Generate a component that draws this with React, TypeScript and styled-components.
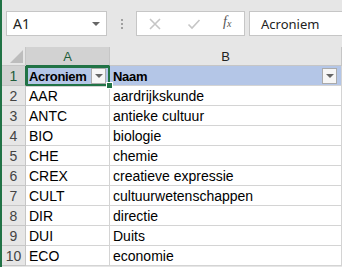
import React from 'react';
import styled, { createGlobalStyle } from 'styled-components';

const rows: [string, string][] = [
  ['AAR', 'aardrijkskunde'],
  ['ANTC', 'antieke cultuur'],
  ['BIO', 'biologie'],
  ['CHE', 'chemie'],
  ['CREX', 'creatieve expressie'],
  ['CULT', 'cultuurwetenschappen'],
  ['DIR', 'directie'],
  ['DUI', 'Duits'],
  ['ECO', 'economie'],
];

export default function App() {
  return (
    <>
      <GlobalStyle />
      <Styled.Window>
        <Styled.Toolbar>
          <Styled.NameBox>
            <span>A1</span>
            <Styled.Caret />
          </Styled.NameBox>
          <Styled.Grip>
            <i />
            <i />
            <i />
          </Styled.Grip>
          <Styled.FxButtons>
            <Styled.FxIcon $left={11}>
              <svg width="14" height="14" viewBox="0 0 14 14">
                <path d="M2 2 L12 12 M12 2 L2 12" stroke="#c6c6c6" strokeWidth="1.6" fill="none" />
              </svg>
            </Styled.FxIcon>
            <Styled.FxIcon $left={50}>
              <svg width="14" height="14" viewBox="0 0 14 14">
                <path d="M1.5 7.5 L5 11 L12.5 3" stroke="#c6c6c6" strokeWidth="1.6" fill="none" />
              </svg>
            </Styled.FxIcon>
            <Styled.Fx>
              f<sub>x</sub>
            </Styled.Fx>
          </Styled.FxButtons>
          <Styled.Formula>Acroniem</Styled.Formula>
        </Styled.Toolbar>

        <Styled.Sheet>
          <Styled.Corner>
            <svg width="13" height="13" viewBox="0 0 13 13">
              <path d="M13 0 L13 13 L0 13 Z" fill="#bdbdbd" />
            </svg>
          </Styled.Corner>
          <Styled.ColHead $active>A</Styled.ColHead>
          <Styled.ColHead>B</Styled.ColHead>

          <Styled.RowHead $active>1</Styled.RowHead>
          <Styled.HeadCell $selected>
            Acroniem
            <FilterButton />
            <Styled.Handle />
          </Styled.HeadCell>
          <Styled.HeadCell>
            Naam
            <FilterButton />
          </Styled.HeadCell>

          {rows.map(([code, name], i) => (
            <React.Fragment key={code}>
              <Styled.RowHead>{i + 2}</Styled.RowHead>
              <Styled.Cell>{code}</Styled.Cell>
              <Styled.Cell>{name}</Styled.Cell>
            </React.Fragment>
          ))}
        </Styled.Sheet>
      </Styled.Window>
    </>
  );
}

function FilterButton() {
  return (
    <Styled.Filter>
      <Styled.Caret />
    </Styled.Filter>
  );
}

const GlobalStyle = createGlobalStyle`
  body {
    margin: 0;
    background: #ffffff;
  }
`;

const Styled = {
  Window: styled.div`
    width: 342px;
    height: 267px;
    overflow: hidden;
    box-sizing: border-box;
    border-left: 2px solid #217346;
    background: #e6e6e6;
  `,
  Toolbar: styled.div`
    display: flex;
    align-items: flex-start;
    height: 47px;
    box-sizing: border-box;
    padding: 11px 0 0 4px;
  `,
  NameBox: styled.div`
    display: flex;
    align-items: center;
    justify-content: space-between;
    width: 101px;
    height: 25px;
    box-sizing: border-box;
    padding: 0 6px 0 6px;
    border: 1px solid #c6c6c6;
    background: #fff;
    font-family: 'Noto Sans', 'Open Sans', sans-serif;
    font-size: 14px;
    color: #222;
  `,
  Caret: styled.span`
    width: 0;
    height: 0;
    border-left: 4px solid transparent;
    border-right: 4px solid transparent;
    border-top: 4px solid #666;
  `,
  Grip: styled.div`
    display: flex;
    flex-direction: column;
    gap: 2px;
    width: 2px;
    margin: 8px 13px 0 14px;
    i {
      display: block;
      width: 2px;
      height: 2px;
      background: #a0a0a0;
    }
  `,
  FxButtons: styled.div`
    position: relative;
    width: 109px;
    height: 25px;
    box-sizing: border-box;
    border: 1px solid #c6c6c6;
    background: #fff;
  `,
  FxIcon: styled.span<{ $left: number }>`
    position: absolute;
    top: 5px;
    left: ${(p) => p.$left}px;
    display: flex;
  `,
  Fx: styled.span`
    position: absolute;
    top: 2px;
    left: 86px;
    font-family: 'Liberation Serif', serif;
    font-style: italic;
    font-size: 14px;
    color: #555;
    sub {
      font-size: 10px;
      vertical-align: -1px;
    }
  `,
  Formula: styled.div`
    flex: 1;
    height: 25px;
    margin-left: 4px;
    box-sizing: border-box;
    padding: 3px 0 0 11px;
    border: 1px solid #c6c6c6;
    border-right: none;
    background: #fff;
    font-family: 'Noto Sans', 'Open Sans', sans-serif;
    font-size: 13px;
    color: #222;
  `,
  Sheet: styled.div`
    display: grid;
    grid-template-columns: 24px 84px 1fr;
    grid-template-rows: 19px repeat(10, 20px);
    background: #fff;
  `,
  Corner: styled.div`
    display: flex;
    align-items: flex-end;
    justify-content: flex-end;
    padding: 0 2px 2px 0;
    background: #e6e6e6;
    border-right: 1px solid #c6c6c6;
    border-bottom: 1px solid #c6c6c6;
  `,
  ColHead: styled.div<{ $active?: boolean }>`
    display: flex;
    align-items: center;
    justify-content: center;
    background: ${(p) => (p.$active ? '#d2d2d2' : '#e6e6e6')};
    border-right: 1px solid #c6c6c6;
    border-bottom: ${(p) => (p.$active ? '1px solid #217346' : '1px solid #c6c6c6')};
    font-family: 'Liberation Sans', Arial, sans-serif;
    font-size: 13px;
    color: ${(p) => (p.$active ? '#1f5d3a' : '#222')};
  `,
  RowHead: styled.div<{ $active?: boolean }>`
    display: flex;
    align-items: center;
    justify-content: center;
    padding-top: 1px;
    background: ${(p) => (p.$active ? '#d2d2d2' : '#e6e6e6')};
    border-right: ${(p) => (p.$active ? '1px solid #217346' : '1px solid #c6c6c6')};
    border-bottom: 1px solid #c6c6c6;
    font-family: 'Liberation Sans', Arial, sans-serif;
    font-size: 14px;
    color: ${(p) => (p.$active ? '#1f5d3a' : '#444')};
  `,
  Cell: styled.div`
    display: flex;
    align-items: center;
    padding: 1px 0 0 3px;
    border-right: 1px solid #d4d4d4;
    border-bottom: 1px solid #d4d4d4;
    font-family: 'Liberation Sans', Arial, sans-serif;
    font-size: 14px;
    color: #000;
    white-space: nowrap;
    overflow: hidden;
  `,
  HeadCell: styled.div<{ $selected?: boolean }>`
    position: relative;
    display: flex;
    align-items: center;
    padding: 1px 0 0 3px;
    background: #b4c6e7;
    border-right: 1px solid #d4d4d4;
    border-bottom: 1px solid #d4d4d4;
    font-family: 'Liberation Sans', Arial, sans-serif;
    font-size: 13px;
    font-weight: bold;
    letter-spacing: -0.3px;
    color: #000;
    white-space: nowrap;
    box-shadow: ${(p) => (p.$selected ? 'inset 0 0 0 2px #217346' : 'none')};
    margin: ${(p) => (p.$selected ? '0 -1px -1px 0' : '0')};
  `,
  Filter: styled.span`
    position: absolute;
    top: 2px;
    right: 4px;
    display: flex;
    align-items: center;
    justify-content: center;
    width: 15px;
    height: 16px;
    box-sizing: border-box;
    border: 1px solid #aaa;
    background: #f6f6f6;
  `,
  Handle: styled.span`
    position: absolute;
    right: -3px;
    bottom: -3px;
    width: 5px;
    height: 5px;
    background: #217346;
    border: 1px solid #fff;
    z-index: 2;
  `,
};
